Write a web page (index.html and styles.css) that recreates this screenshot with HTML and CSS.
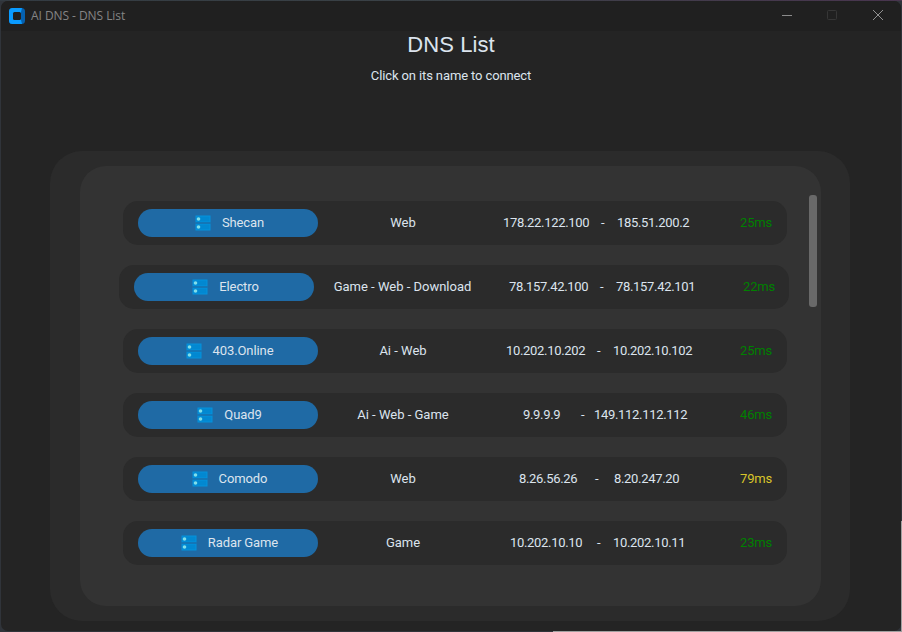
FILE: index.html
```
<!DOCTYPE html>
<html lang="en">
<head>
<meta charset="utf-8">
<title>AI DNS - DNS List</title>
<link rel="stylesheet" href="styles.css">
</head>
<body>
<svg class="defs" width="0" height="0">
  <symbol id="server" viewBox="0 0 16 16">
    <path fill="#0492dc" d="M.5.5h15v7H.5zM.5 8.500h15v7H.5z"/>
    <path fill="#0288d1" d="M1.500 1.500h13v5h-13zM1.500 9.500h13v5h-13z"/>
    <path fill="#1475b5" d="M.5 7.200h15v1.500H.5z"/>
    <circle cx="3.500" cy="4" r="1.800" fill="#80deea"/>
    <circle cx="3.500" cy="12" r="1.800" fill="#80deea"/>
  </symbol>
</svg>
<div class="window">
  <header class="titlebar">
    <svg class="logo" width="16" height="16" viewBox="0 0 16 16">
      <rect width="16" height="16" rx="3.5" fill="#0560ae"/>
      <path fill="#0a9bff" d="M3.500 0H13l-1 4v8l1 4H3.500A3.500 3.500 0 0 1 0 12.500v-9A3.500 3.500 0 0 1 3.500 0z"/>
      <rect x="4" y="4" width="8" height="8" rx="1.5" fill="#202020"/>
    </svg>
    <span class="caption">AI DNS - DNS List</span>
    <div class="controls">
      <svg width="46" height="30" viewBox="0 0 46 30"><path d="M18 15.5h10" stroke="#8b8b8b"/></svg>
      <svg width="46" height="30" viewBox="0 0 46 30"><rect x="17.5" y="10.5" width="9" height="9" rx="1" fill="none" stroke="#363636"/></svg>
      <svg width="46" height="30" viewBox="0 0 46 30"><path d="M17 10l10 10M27 10L17 20" stroke="#929292"/></svg>
    </div>
  </header>
  <h1>DNS List</h1>
  <p class="hint">Click on its name to connect</p>
  <main class="panel">
    <div class="scroller">
      <div class="list">
        <div class="row shecan"><button><svg><use href="#server"/></svg>Shecan</button><span class="kind">Web</span><span class="ip">178.22.122.100</span><span>-</span><span class="ip">185.51.200.2</span><span class="ping">25ms</span></div>
        <div class="row electro"><button><svg><use href="#server"/></svg>Electro</button><span class="kind">Game - Web - Download</span><span class="ip">78.157.42.100</span><span>-</span><span class="ip">78.157.42.101</span><span class="ping">22ms</span></div>
        <div class="row online"><button><svg><use href="#server"/></svg>403.Online</button><span class="kind">Ai - Web</span><span class="ip">10.202.10.202</span><span>-</span><span class="ip">10.202.10.102</span><span class="ping">25ms</span></div>
        <div class="row quad"><button><svg><use href="#server"/></svg>Quad9</button><span class="kind">Ai - Web - Game</span><span class="ip">9.9.9.9</span><span>-</span><span class="ip">149.112.112.112</span><span class="ping">46ms</span></div>
        <div class="row comodo"><button><svg><use href="#server"/></svg>Comodo</button><span class="kind">Web</span><span class="ip">8.26.56.26</span><span>-</span><span class="ip">8.20.247.20</span><span class="ping slow">79ms</span></div>
        <div class="row radar"><button><svg><use href="#server"/></svg>Radar Game</button><span class="kind">Game</span><span class="ip">10.202.10.10</span><span>-</span><span class="ip">10.202.10.11</span><span class="ping">23ms</span></div>
      </div>
      <div class="thumb"></div>
    </div>
  </main>
</div>
</body>
</html>
```
FILE: styles.css
```
* { box-sizing: border-box; }
body {
  margin: 0;
  width: 902px;
  height: 632px;
  overflow: hidden;
  background:
    linear-gradient(#a0a0a0, #a0a0a0) 553px 631px / 349px 1px no-repeat,
    linear-gradient(#a0a0a0, #a0a0a0) 901px 521px / 1px 111px no-repeat,
    linear-gradient(90deg, #333b42, #3b4247 50%, #49354f) 0 0 / 902px 1px no-repeat,
    #30343a;
  font: 13px/16px Roboto, sans-serif;
  color: #dce4ee;
}
.defs { position: absolute; }
.window {
  width: 900px;
  height: 630px;
  margin: 1px;
  border-radius: 7px;
  background: #242424;
  overflow: hidden;
}
.titlebar {
  display: flex;
  align-items: center;
  height: 30px;
  padding-left: 8px;
  background: #202020;
}
.logo { flex: none; margin-top: -1px; }
.caption {
  margin-left: 6px;
  font: 12px/16px "Open Sans", sans-serif;
  letter-spacing: -0.06px;
  color: #858585;
}
.controls { display: flex; margin: -2px -1px 0 auto; }
h1 {
  margin: 0;
  height: 28px;
  font: 22px/28px "Liberation Sans", sans-serif;
  letter-spacing: 0.1px;
  text-align: center;
}
.hint {
  margin: 9px 0 0;
  letter-spacing: -0.12px;
  text-align: center;
}
.panel {
  width: 800px;
  height: 470px;
  margin: 67px 0 0 49px;
  padding: 15px 29px 15px 30px;
  border-radius: 32px;
  background: #2b2b2b;
}
.scroller {
  display: flex;
  justify-content: space-between;
  height: 440px;
  padding: 29px 4px 0 39px;
  border-radius: 26px;
  background: #333333;
}
.list {
  display: flex;
  flex-direction: column;
  gap: 20px;
  padding-top: 6px;
}
.thumb { width: 8px; height: 112px; border-radius: 3px; background: #696969; }
.row {
  display: grid;
  align-items: center;
  width: 664px;
  height: 44px;
  margin-left: 4px;
  padding-left: 15px;
  border-radius: 15px;
  background: #2b2b2b;
  white-space: nowrap;
}
button {
  display: flex;
  align-items: center;
  justify-content: center;
  gap: 11px;
  width: 180px;
  height: 28px;
  padding: 0 0 0 3px;
  border: 0;
  border-radius: 14px;
  background: #1f6aa5;
  font: inherit;
  letter-spacing: -0.1px;
  color: inherit;
}
button svg { width: 16px; height: 16px; }
.kind { text-align: center; }
.row > .kind { grid-column: 2; }
.row > .kind + span { grid-column: 4; }
.shecan { grid-template-columns: 180px 170px 15px 98px 16px 123px auto; }
.electro { grid-template-columns: 180px 177px 18px 91px 16px 127px auto; width: 670px; margin-left: 0; }
.online { grid-template-columns: 180px 170px 18px 91px 16px 127px auto; }
.quad { grid-template-columns: 180px 170px 35px 58px 13px 146px auto; }
.comodo { grid-template-columns: 180px 170px 31px 76px 19px 126px auto; }
.radar { grid-template-columns: 180px 170px 22px 87px 16px 127px auto; }
.ip { letter-spacing: -0.31px; }
.ping { color: #008000; letter-spacing: -0.15px; }
.slow { color: #d9c52a; }
```
